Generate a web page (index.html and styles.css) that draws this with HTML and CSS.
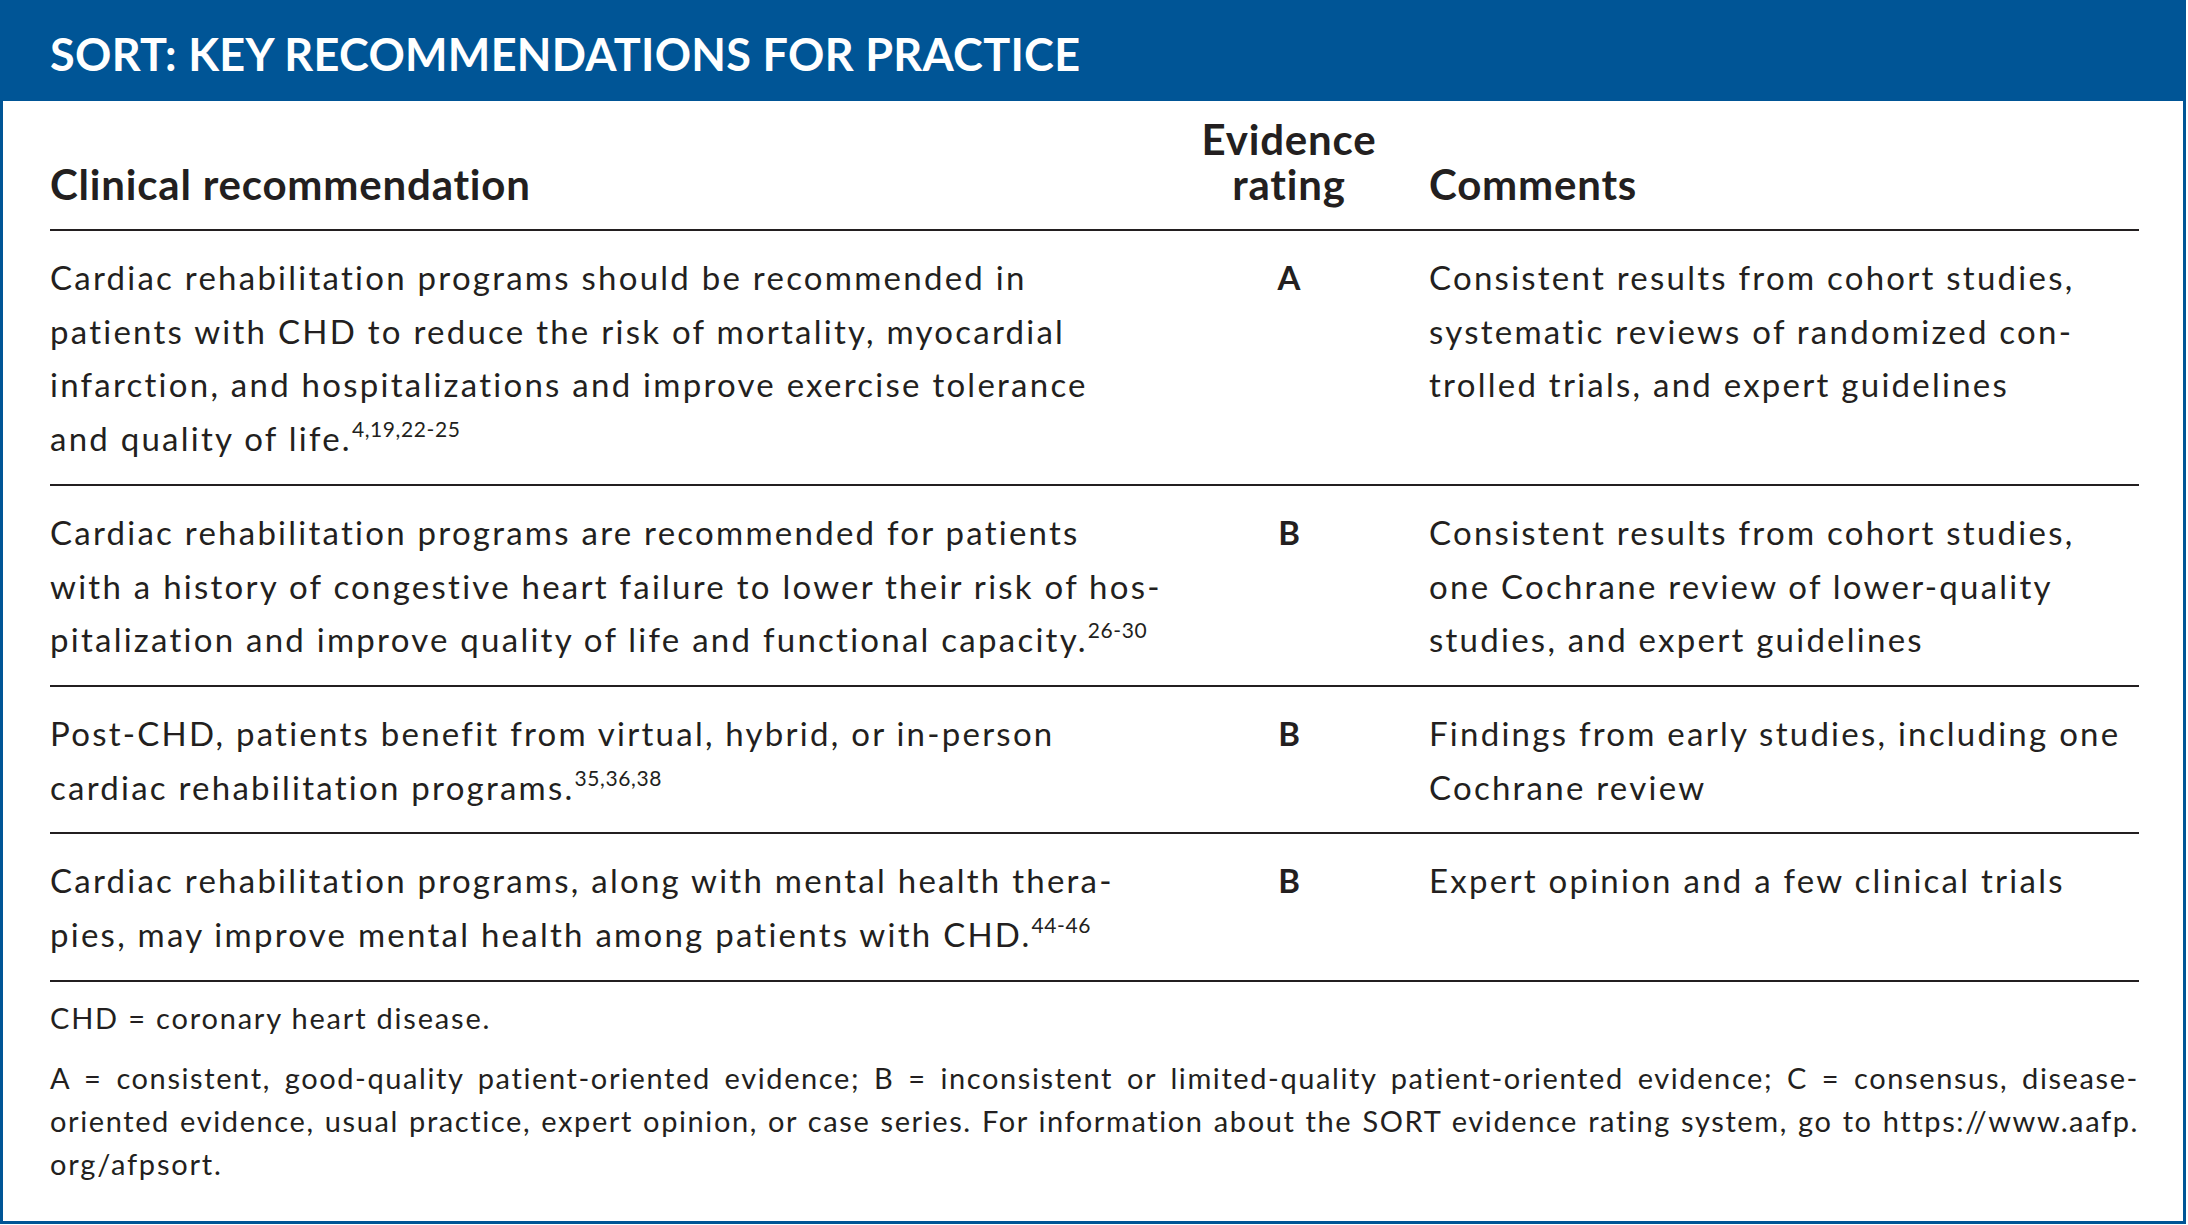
FILE: index.html
```html
<!DOCTYPE html>
<html lang="en">
<head>
<meta charset="utf-8">
<title>SORT: Key Recommendations for Practice</title>
<link rel="stylesheet" href="styles.css">
</head>
<body>
<div class="card">
  <div class="banner"><h1 class="title">SORT: KEY RECOMMENDATIONS FOR PRACTICE</h1></div>
  <div class="content">
    <div class="grid head">
      <div class="c1 hcell">Clinical recommendation</div>
      <div class="c2 hcell"><span class="hl">Evidence</span><span class="hl">rating</span></div>
      <div class="c3 hcell">Comments</div>
    </div>
    <div class="grid row">
      <div class="c1">Cardiac rehabilitation programs should be recommended in<br>patients with CHD to reduce the risk of mortality, myocardial<br>infarction, and hospitalizations and improve exercise tolerance<br>and quality of life.<sup>4,19,22-25</sup></div>
      <div class="c2 rate">A</div>
      <div class="c3">Consistent results from cohort studies,<br>systematic reviews of randomized con-<br>trolled trials, and expert guidelines</div>
    </div>
    <div class="grid row">
      <div class="c1">Cardiac rehabilitation programs are recommended for patients<br>with a history of congestive heart failure to lower their risk of hos-<br>pitalization and improve quality of life and functional capacity.<sup>26-30</sup></div>
      <div class="c2 rate">B</div>
      <div class="c3">Consistent results from cohort studies,<br>one Cochrane review of lower-quality<br>studies, and expert guidelines</div>
    </div>
    <div class="grid row">
      <div class="c1">Post-CHD, patients benefit from virtual, hybrid, or in-person<br>cardiac rehabilitation programs.<sup>35,36,38</sup></div>
      <div class="c2 rate">B</div>
      <div class="c3">Findings from early studies, including one<br>Cochrane review</div>
    </div>
    <div class="grid row">
      <div class="c1">Cardiac rehabilitation programs, along with mental health thera-<br>pies, may improve mental health among patients with CHD.<sup>44-46</sup></div>
      <div class="c2 rate">B</div>
      <div class="c3">Expert opinion and a few clinical trials</div>
    </div>
    <div class="notes">
      <p class="note">CHD = coronary heart disease.</p>
      <p class="note">
        <span class="jl">A = consistent, good-quality patient-oriented evidence; B = inconsistent or limited-quality patient-oriented evidence; C = consensus, disease-</span>
        <span class="jl">oriented evidence, usual practice, expert opinion, or case series. For information about the SORT evidence rating system, go to https://www.aafp.</span>
        <span class="last">org/afpsort.</span>
      </p>
    </div>
  </div>
</div>
</body>
</html>
```
FILE: styles.css
```css
html, body {
  margin: 0;
  padding: 0;
  background: #ffffff;
}
body {
  font-family: Lato, "Noto Sans", "Liberation Sans", sans-serif;
  color: #231f20;
}
.card {
  width: 2186px;
  height: 1224px;
  box-sizing: border-box;
  border: 3px solid #005596;
  border-top: 0;
  background: #ffffff;
}
.banner {
  height: 101px;
  background: #005596;
  margin: 0 -3px;
  padding: 0 0 0 50px;
  display: flex;
  align-items: center;
  box-sizing: border-box;
}
.title {
  margin: 0;
  padding-top: 8px;
  font-size: 45px;
  font-weight: 700;
  color: #ffffff;
  letter-spacing: 0.3px;
  line-height: 1;
}
.content {
  padding: 0 44px 0 47px;
}
.grid {
  display: grid;
  grid-template-columns: 1099px 280px 1fr;
  border-bottom: 2px solid #231f20;
}
.c1, .c3 {
  white-space: nowrap;
}
.head {
  padding: 16px 0 22px;
  align-items: end;
}
.hcell {
  font-weight: 700;
  font-size: 42px;
  line-height: 45px;
  letter-spacing: 0.8px;
}
.hl {
  display: block;
  height: 45px;
}
.c2 {
  text-align: center;
}
.row {
  padding: 20px 0 18px;
  font-size: 33px;
  line-height: 53.7px;
  letter-spacing: 2.25px;
}
.rate {
  font-weight: 700;
  letter-spacing: 0;
}
sup {
  font-size: 21px;
  line-height: 0;
  letter-spacing: 0.6px;
  vertical-align: 14px;
}
.notes {
  padding-top: 15px;
  font-size: 29px;
  line-height: 42.6px;
  letter-spacing: 1.8px;
}
.note {
  margin: 0 0 18px;
}
.jl {
  display: block;
  text-align: justify;
  text-align-last: justify;
  letter-spacing: 1.6px;
}
.last {
  display: block;
}
```
